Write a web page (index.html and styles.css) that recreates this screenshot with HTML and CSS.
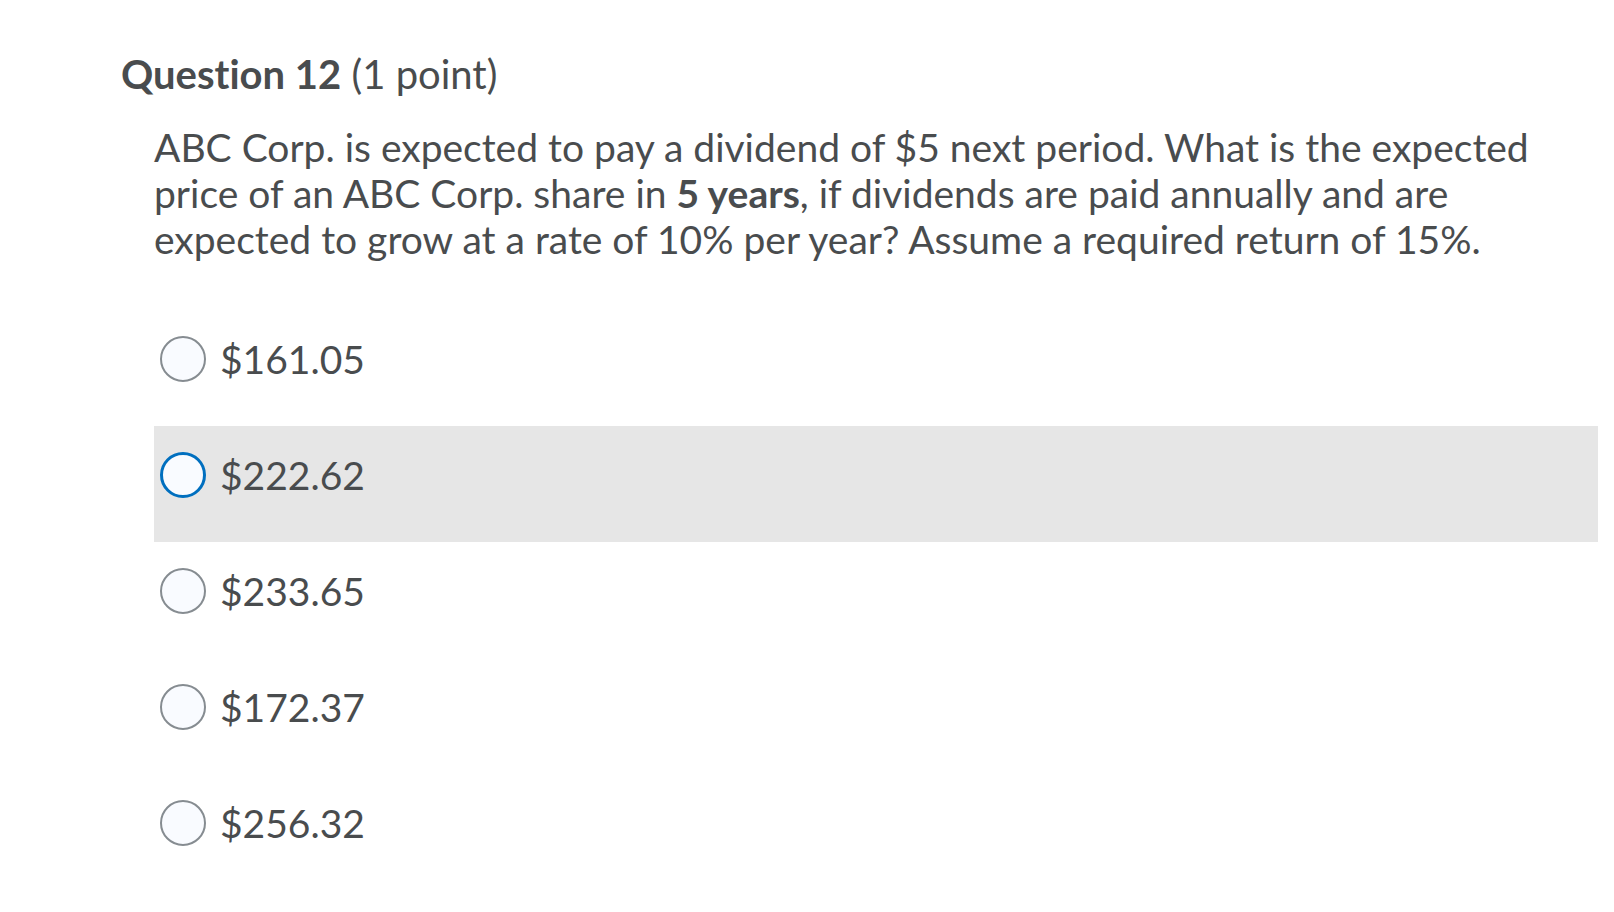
FILE: index.html
```html
<!DOCTYPE html>
<html lang="en">
<head>
<meta charset="utf-8">
<title>Question 12</title>
<link rel="stylesheet" href="styles.css">
</head>
<body>
<div class="page">
  <h2 class="q-title"><strong>Question 12</strong> (1 point)</h2>
  <div class="q-body">
    <p class="q-text">ABC Corp. is expected to pay a dividend of $5 next period. What is the expected price of an ABC Corp. share in <strong>5 years</strong>, if dividends are paid annually and are expected to grow at a rate of 10% per year? Assume a required return of 15%.</p>
    <div class="options">
      <label class="opt"><span class="radio"></span><span class="opt-text">$161.05</span></label>
      <label class="opt opt-hover"><span class="radio radio-focus"></span><span class="opt-text">$222.62</span></label>
      <label class="opt"><span class="radio"></span><span class="opt-text">$233.65</span></label>
      <label class="opt"><span class="radio"></span><span class="opt-text">$172.37</span></label>
      <label class="opt"><span class="radio"></span><span class="opt-text">$256.32</span></label>
    </div>
  </div>
</div>
</body>
</html>
```

FILE: styles.css
```css
html, body {
  margin: 0;
  padding: 0;
  background: #ffffff;
}

body {
  font-family: Lato, "Open Sans", sans-serif;
  color: #494c4e;
  font-variant-ligatures: none;
  font-feature-settings: "liga" 0, "clig" 0, "dlig" 0, "calt" 0;
}

.page {
  padding-top: 52px;
}

.q-title {
  margin: 0 0 0 121px;
  font-size: 40px;
  line-height: 44px;
  font-weight: 400;
}

.q-title strong {
  font-weight: 700;
}

.q-body {
  margin: 28px 16px 0 154px;
}

.q-text {
  margin: 0;
  font-size: 39px;
  line-height: 46px;
}

.q-text strong {
  font-weight: 700;
}

.options {
  margin-top: 48px;
  display: flex;
  flex-direction: column;
}

.opt {
  display: flex;
  align-items: flex-start;
  height: 116px;
  box-sizing: border-box;
  padding: 26px 0 0 6px;
}

.opt-hover {
  background: #e6e6e6;
}

.radio {
  width: 42px;
  height: 42px;
  border-radius: 50%;
  border: 2px solid #868c91;
  background: #f9fbff;
  flex: none;
}

.radio-focus {
  width: 40px;
  height: 40px;
  border: 3px solid #006fbf;
}

.opt-text {
  margin-left: 14px;
  font-size: 39px;
  line-height: 46px;
}
```
